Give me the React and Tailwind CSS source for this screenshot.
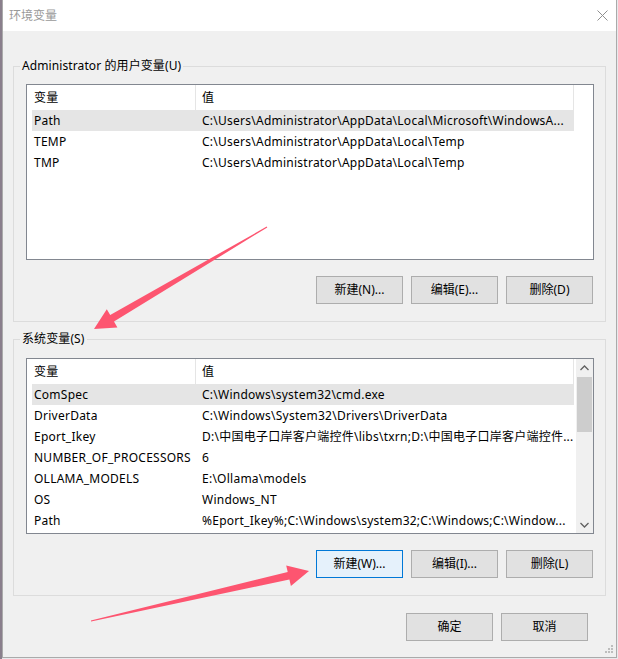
import React from 'react';

// Windows 10 "环境变量" dialog, with two annotation arrows

const userRows = [
  ['Path', 'C:\\Users\\Administrator\\AppData\\Local\\Microsoft\\WindowsA...', true],
  ['TEMP', 'C:\\Users\\Administrator\\AppData\\Local\\Temp'],
  ['TMP', 'C:\\Users\\Administrator\\AppData\\Local\\Temp'],
];

const sysRows = [
  ['ComSpec', 'C:\\Windows\\system32\\cmd.exe', true],
  ['DriverData', 'C:\\Windows\\System32\\Drivers\\DriverData'],
  ['Eport_Ikey', 'D:\\中国电子口岸客户端控件\\libs\\txrn;D:\\中国电子口岸客户端控件...'],
  ['NUMBER_OF_PROCESSORS', '6'],
  ['OLLAMA_MODELS', 'E:\\Ollama\\models'],
  ['OS', 'Windows_NT'],
  ['Path', '%Eport_Ikey%;C:\\Windows\\system32;C:\\Windows;C:\\Window...'],
];

function arrowPath(tx, ty, hx, hy) {
  const dx = hx - tx;
  const dy = hy - ty;
  const len = Math.hypot(dx, dy);
  const ux = dx / len;
  const uy = dy / len;
  const nx = -uy;
  const ny = ux;
  const headLen = 21;
  const headHalf = 10.5;
  const shaftHead = 3.8;
  const shaftTail = 0.5;
  const bx = hx - ux * headLen;
  const by = hy - uy * headLen;
  const pts = [
    [tx + nx * shaftTail, ty + ny * shaftTail],
    [bx + nx * shaftHead, by + ny * shaftHead],
    [bx + nx * headHalf, by + ny * headHalf],
    [hx, hy],
    [bx - nx * headHalf, by - ny * headHalf],
    [bx - nx * shaftHead, by - ny * shaftHead],
    [tx - nx * shaftTail, ty - ny * shaftTail],
  ];
  return 'M' + pts.map((p) => p[0].toFixed(1) + ' ' + p[1].toFixed(1)).join(' L') + ' Z';
}

function Btn({ children, focused }) {
  return (
    <button
      className={
        focused
          ? 'h-[28px] w-[87px] border border-[#0078d7] bg-[#e5f1fb] text-[12px] text-black'
          : 'h-[28px] w-[87px] border border-[#adadad] bg-[#e1e1e1] text-[12px] text-black'
      }
    >
      {children}
    </button>
  );
}

function Chevron({ down }) {
  return (
    <svg width="9" height="6" viewBox="0 0 9 6">
      <polyline
        points={down ? '0.5,1 4.5,5 8.5,1' : '0.5,5 4.5,1 8.5,5'}
        fill="none"
        stroke="#606060"
        strokeWidth="1.3"
      />
    </svg>
  );
}

function Scrollbar() {
  return (
    <div className="flex w-[17px] flex-col bg-[#f0f0f0]">
      <div className="flex h-[17px] items-center justify-center">
        <Chevron />
      </div>
      <div className="mx-[1px] mt-[1px] h-[55px] bg-[#cdcdcd]" />
      <div className="flex-1" />
      <div className="flex h-[17px] items-center justify-center">
        <Chevron down />
      </div>
    </div>
  );
}

function VarList({ rows, scroll }) {
  return (
    <div className="flex h-[176px] w-[568px] border border-[#828790] bg-white text-[12px] tracking-[0.25px] text-black">
      <div className="flex-1 overflow-hidden">
        {/* header */}
        <div className="flex h-[25px]">
          <div className="flex w-[169px] items-center border-r border-[#e5e5e5] pl-[7px]">变量</div>
          <div className="flex w-[378px] items-center border-r border-[#e5e5e5] pl-[6px]">值</div>
        </div>
        {rows.map(([name, value, sel]) => (
          <div
            key={name + value}
            className={
              sel
                ? 'ml-[5px] flex h-[21px] w-[542px] items-center bg-[#e5e5e5]'
                : 'ml-[5px] flex h-[21px] w-[542px] items-center'
            }
          >
            <div className="w-[164px] shrink-0 overflow-hidden whitespace-nowrap pl-[2px]">{name}</div>
            <div className="flex-1 overflow-hidden whitespace-nowrap pl-[6px]">{value}</div>
          </div>
        ))}
      </div>
      {scroll && <Scrollbar />}
    </div>
  );
}

function Group({ title, rows, scroll, buttons, className }) {
  return (
    <fieldset className={'ml-[10px] w-[593px] border border-[#dcdcdc] pl-[12px] pr-[11px] pb-[17px] ' + className}>
      <legend className="-ml-[6px] px-[2px] text-[12px] leading-[16px] tracking-[0.1px] text-black">{title}</legend>
      <VarList rows={rows} scroll={scroll} />
      <div className="mr-[1px] flex justify-end gap-[8px] pt-[16px]">{buttons}</div>
    </fieldset>
  );
}

export default function App() {
  return (
    <div className="relative flex h-[659px] w-[618px] bg-[#e9e9ec] font-['Noto_Sans','Noto_Sans_CJK_SC',sans-serif]">
      <div className="w-[2px] bg-[#8a7f8c]" />

      {/* dialog window */}
      <div className="relative flex h-[658px] w-[615px] flex-col border-x border-b border-[#aaaaaa] bg-[#f0f0f0]">
        <div className="flex h-[31px] items-center justify-between bg-white pl-[6px] pr-[8px]">
          <span className="text-[12px] text-[#999999]">环境变量</span>
          <svg width="11" height="11" viewBox="0 0 11 11">
            <path d="M0.5 0.5 L10.5 10.5 M10.5 0.5 L0.5 10.5" stroke="#8f8f8f" strokeWidth="1" />
          </svg>
        </div>

        <Group
          className="mt-[27px] pt-[10px]"
          title="Administrator 的用户变量(U)"
          rows={userRows}
          buttons={
            <>
              <Btn>新建(N)...</Btn>
              <Btn>编辑(E)...</Btn>
              <Btn>删除(D)</Btn>
            </>
          }
        />

        <Group
          className="mt-[9px] pt-[11px]"
          title="系统变量(S)"
          rows={sysRows}
          scroll
          buttons={
            <>
              <Btn focused>新建(W)...</Btn>
              <Btn>编辑(I)...</Btn>
              <Btn>删除(L)</Btn>
            </>
          }
        />

        <div className="flex justify-end gap-[8px] pr-[28px] pt-[17px]">
          <Btn>确定</Btn>
          <Btn>取消</Btn>
        </div>

        {/* resize grip */}
        <svg className="absolute bottom-[3px] right-[2px]" width="10" height="10" viewBox="0 0 10 10">
          <rect x="7" y="1" width="2" height="2" fill="#bdbdbd" />
          <rect x="4" y="4" width="2" height="2" fill="#bdbdbd" />
          <rect x="7" y="4" width="2" height="2" fill="#bdbdbd" />
          <rect x="1" y="7" width="2" height="2" fill="#bdbdbd" />
          <rect x="4" y="7" width="2" height="2" fill="#bdbdbd" />
          <rect x="7" y="7" width="2" height="2" fill="#bdbdbd" />
        </svg>
      </div>

      {/* annotation arrows */}
      <svg className="pointer-events-none absolute left-0 top-0" width="618" height="659">
        <path d={arrowPath(267, 227, 94, 329)} fill="#fd5570" />
        <path d={arrowPath(91, 621, 309, 571)} fill="#fd5570" />
      </svg>
    </div>
  );
}
